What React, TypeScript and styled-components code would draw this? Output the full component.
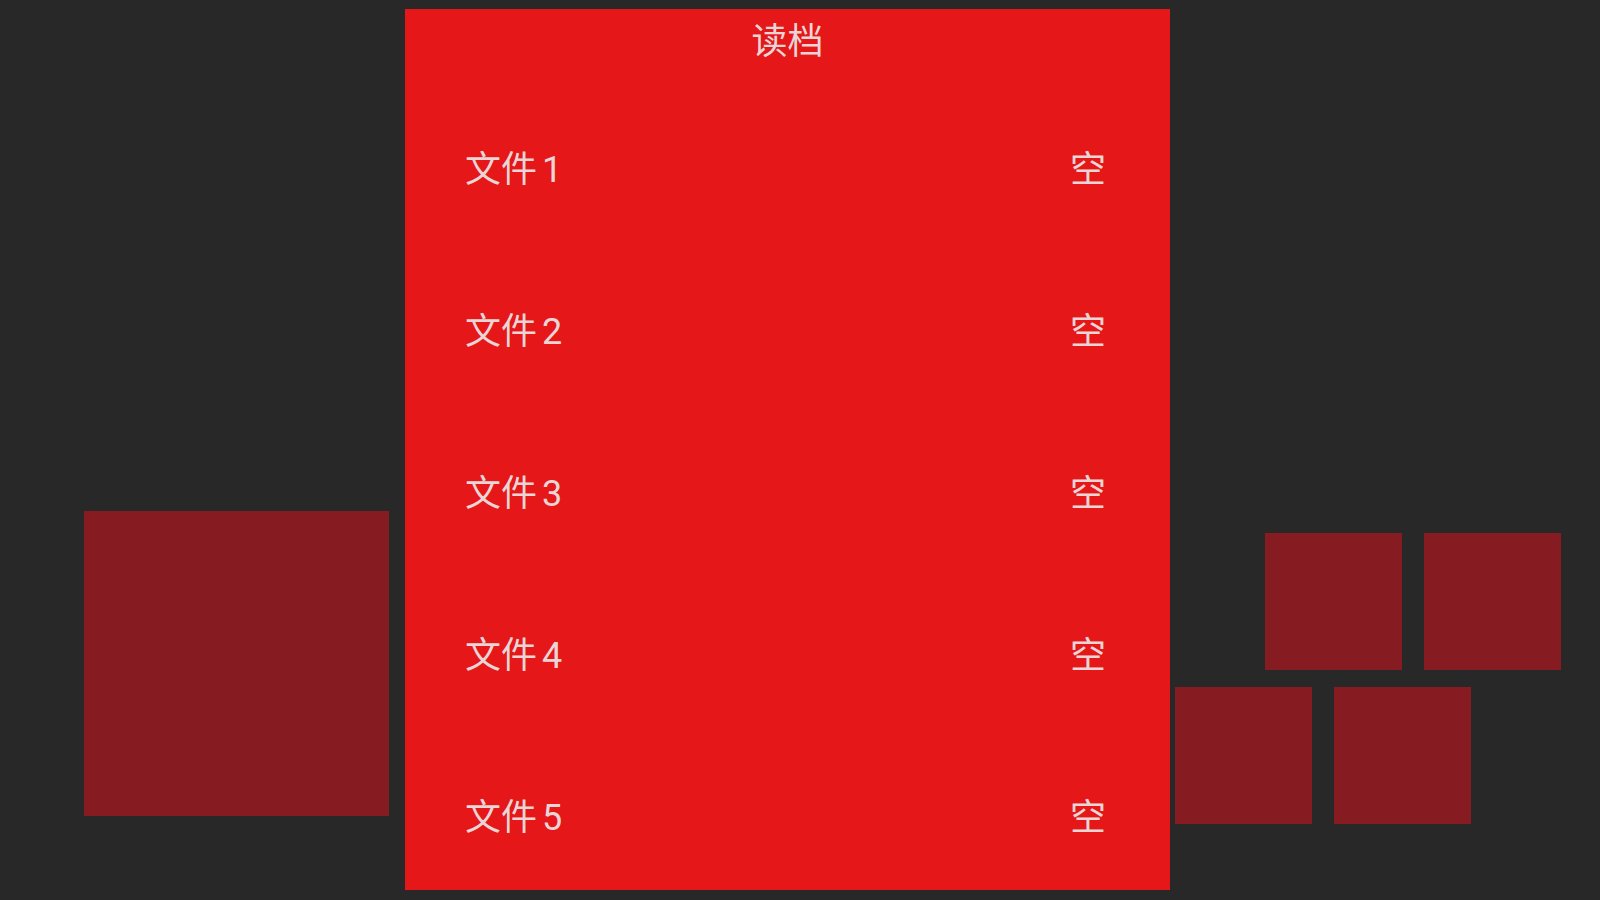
import styled, { createGlobalStyle } from "styled-components"

const GlobalStyle = createGlobalStyle`
  html, body {
    margin: 0;
    padding: 0;
    background-color: #282828;
  }
`

const Page = styled.div`
  display: flex;
  width: 1600px;
  height: 900px;
  box-sizing: border-box;
  padding-top: 9px;
  font-family: Roboto, "Noto Sans CJK SC", sans-serif;
  overflow: hidden;
`

const LeftSide = styled.div`
  width: 405px;
  box-sizing: border-box;
  padding: 502px 0 0 84px;
`

const Tile = styled.div<{ $size: number }>`
  width: ${(p) => p.$size}px;
  height: ${(p) => p.$size}px;
  background-color: #861c21;
  flex-shrink: 0;
`

const Panel = styled.div`
  width: 765px;
  height: 881px;
  background-color: #e51718;
  color: #e9d5d5;
  display: flex;
  flex-direction: column;
`

const Title = styled.div`
  height: 58px;
  display: flex;
  align-items: center;
  justify-content: center;
  font-size: 36px;
`

const FileList = styled.div`
  display: flex;
  flex-direction: column;
  gap: 62px;
  padding: 49px 64px 0 60px;
`

const FileRow = styled.div`
  height: 100px;
  display: flex;
  align-items: center;
  justify-content: space-between;
  font-size: 36px;
`

const Index = styled.span`
  margin-left: 5px;
`

const RightSide = styled.div`
  flex: 1;
  display: flex;
  flex-direction: column;
  gap: 17px;
  padding: 524px 0 0 5px;
`

const TileRow = styled.div<{ $indent: number }>`
  display: flex;
  gap: 22px;
  padding-left: ${(p) => p.$indent}px;
`

const files = [1, 2, 3, 4, 5]

export default function App() {
  return (
    <>
      <GlobalStyle />
      <Page>
        <LeftSide>
          <Tile $size={305} />
        </LeftSide>
        <Panel>
          <Title>读档</Title>
          <FileList>
            {files.map((n) => (
              <FileRow key={n}>
                <span>
                  文件<Index>{n}</Index>
                </span>
                <span>空</span>
              </FileRow>
            ))}
          </FileList>
        </Panel>
        <RightSide>
          <TileRow $indent={90}>
            <Tile $size={137} />
            <Tile $size={137} />
          </TileRow>
          <TileRow $indent={0}>
            <Tile $size={137} />
            <Tile $size={137} />
          </TileRow>
        </RightSide>
      </Page>
    </>
  )
}
